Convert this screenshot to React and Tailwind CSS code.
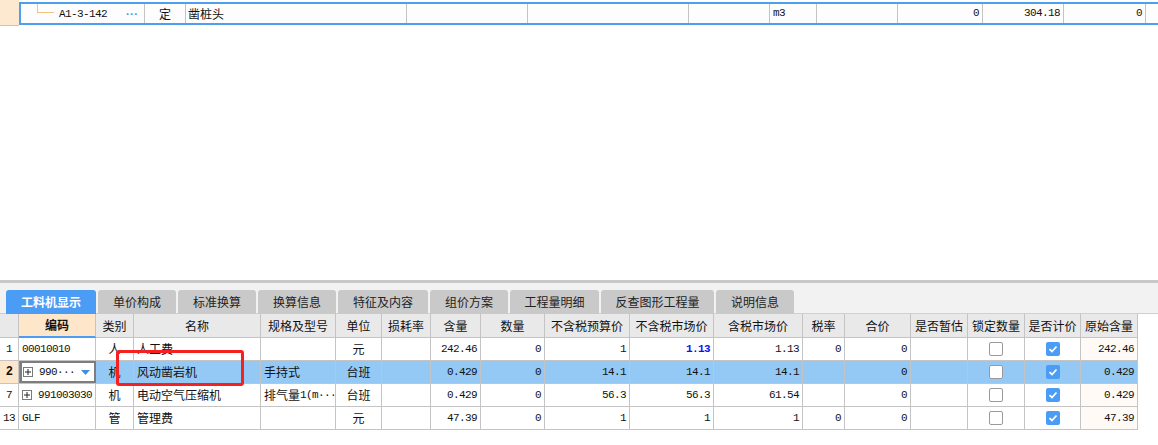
import React from 'react'

const zh = "font-['Noto_Sans_CJK_SC',sans-serif] text-[12px]"
const num = "font-['Liberation_Mono','Noto_Sans_CJK_SC',monospace] text-[11px] tracking-[-0.6px]"

const headers = ['', '编码', '类别', '名称', '规格及型号', '单位', '损耗率', '含量', '数量', '不含税预算价', '不含税市场价', '含税市场价', '税率', '合价', '是否暂估', '锁定数量', '是否计价', '原始含量']

const tabs = [
  { label: '工料机显示', w: 'w-[90px]', active: true },
  { label: '单价构成', w: 'w-[78px]' },
  { label: '标准换算', w: 'w-[78px]' },
  { label: '换算信息', w: 'w-[78px]' },
  { label: '特征及内容', w: 'w-[90px]' },
  { label: '组价方案', w: 'w-[78px]' },
  { label: '工程量明细', w: 'w-[89px]' },
  { label: '反查图形工程量', w: 'w-[113px]' },
  { label: '说明信息', w: 'w-[78px]' },
]

const rows = [
  { no: '1', code: '00010010', type: '人', name: '人工费', spec: '', unit: '元', amt: '242.46', qty: '0', pre: '1', mkt: '1.13', blue: true, tax: '1.13', rate: '0', total: '0', orig: '242.46' },
  { no: '2', code: '990···', plus: true, edit: true, type: '机', name: '风动凿岩机', spec: '手持式', unit: '台班', amt: '0.429', qty: '0', pre: '14.1', mkt: '14.1', tax: '14.1', rate: '', total: '0', orig: '0.429' },
  { no: '7', code: '991003030', plus: true, type: '机', name: '电动空气压缩机', spec: '排气量', specTail: '1(m···', unit: '台班', amt: '0.429', qty: '0', pre: '56.3', mkt: '56.3', tax: '61.54', rate: '', total: '0', orig: '0.429' },
  { no: '13', code: 'GLF', type: '管', name: '管理费', spec: '', unit: '元', amt: '47.39', qty: '0', pre: '1', mkt: '1', tax: '1', rate: '0', total: '0', orig: '47.39' },
]

const grid = 'grid grid-cols-[19px_77px_38px_127px_75px_46px_49px_50px_64px_85px_84px_89px_42px_66px_57px_57px_56px_57px] w-[1138px]'

function PlusBox() {
  return (
    <svg width="10" height="10" viewBox="0 0 10 10" className="shrink-0">
      <rect x="0.5" y="0.5" width="9" height="9" fill="white" stroke="#7a7a7a" />
      <line x1="2" y1="5" x2="8" y2="5" stroke="#222" />
      <line x1="5" y1="2" x2="5" y2="8" stroke="#222" />
    </svg>
  )
}

function Check({ on }) {
  if (on) {
    return (
      <div className="w-[14px] h-[14px] rounded-[2px] bg-[#4a9cf5] flex items-center justify-center">
        <svg width="10" height="10" viewBox="0 0 10 10">
          <polyline points="1.5,5.2 4,7.5 8.5,2.5" fill="none" stroke="white" strokeWidth="1.8" />
        </svg>
      </div>
    )
  }
  return <div className="w-[14px] h-[14px] rounded-[2px] bg-white border border-[#9a9a9a]" />
}

function Row({ r }) {
  const sel = r.edit
  const bg = sel ? 'bg-[#94c8f5]' : 'bg-white'
  const c = 'h-[23px] border-r border-b border-[#c4c4c4] flex items-center'
  const right = `${c} ${bg} justify-end pr-[3px] ${num}`
  return (
    <>
      <div className={`${c} justify-center ${num} ${sel ? 'bg-[#fde6c9] font-bold text-[12px]' : 'bg-white'}`}>{r.no}</div>
      {r.edit ? (
        <div className="h-[23px] border-b border-[#c4c4c4] flex bg-white">
          <div className="w-[1px] h-full bg-[#4a9cf5]" />
          <div className="flex-1 h-full border-2 border-[#7d7d7d] flex items-center pl-[1px] pr-[4px] gap-[6px]">
            <PlusBox />
            <span className={num}>{r.code}</span>
            <svg width="9" height="5" viewBox="0 0 9 5" className="ml-auto">
              <polygon points="0,0 9,0 4.5,5" fill="#3f8fdb" />
            </svg>
          </div>
        </div>
      ) : (
        <div className={`${c} ${bg} pl-[3px] gap-[6px] ${num}`}>
          {r.plus && <PlusBox />}
          <span>{r.code}</span>
        </div>
      )}
      <div className={`${c} ${bg} justify-center ${zh}`}>{r.type}</div>
      <div className={`${c} ${bg} pl-[3px] ${zh}`}>{r.name}</div>
      <div className={`${c} ${bg} pl-[3px] whitespace-nowrap`}>
        <span className={zh}>{r.spec}</span>
        {r.specTail && <span className={num}>{r.specTail}</span>}
      </div>
      <div className={`${c} ${bg} justify-center ${zh}`}>{r.unit}</div>
      <div className={`${c} ${bg}`} />
      <div className={right}>{r.amt}</div>
      <div className={right}>{r.qty}</div>
      <div className={right}>{r.pre}</div>
      <div className={`${right} ${r.blue ? 'text-[#1010ee] font-bold' : ''}`}>{r.mkt}</div>
      <div className={right}>{r.tax}</div>
      <div className={right}>{r.rate}</div>
      <div className={right}>{r.total}</div>
      <div className={`${c} ${bg}`} />
      <div className={`${c} ${bg} justify-center`}><Check on={false} /></div>
      <div className={`${c} ${bg} justify-center`}><Check on={true} /></div>
      <div className={`${c} ${sel ? 'bg-[#94c8f5]' : 'bg-[#fffaf5]'} justify-end pr-[3px] ${num}`}>{r.orig}</div>
    </>
  )
}

export default function App() {
  const tc = 'h-full border-r border-[#c4c4c4] flex items-center'
  return (
    <div className="relative w-[1158px] h-[445px] bg-white overflow-hidden text-[#111]">
      {/* top area */}
      <div className="h-[280px] flex items-start">
        <div className="w-[19px] h-[26px] bg-[#fde8d0] border-b border-[#c4c4c4]" />
        <div className="mt-[2px] h-[23px] flex-1 border-y-2 border-l-2 border-[#4f9ff0] flex bg-[#fdfdfd]">
          <div className={`${tc} w-[124px] items-start relative`}>
            <div className="ml-[16px] w-[17px] h-[9px] border-l border-b border-[#f5c27a]" />
            <span className={`${num} mt-[2px] ml-[5px]`}>A1-3-142</span>
            <span className="ml-[19px] mt-[2px] text-[#3a8ee6] font-bold text-[11px] tracking-[1px]">···</span>
          </div>
          <div className={`${tc} w-[41px] justify-center ${zh}`}>定</div>
          <div className={`${tc} w-[221px] pl-[2px] ${zh}`}>凿桩头</div>
          <div className={`${tc} w-[121px]`} />
          <div className={`${tc} w-[161px]`} />
          <div className={`${tc} w-[81px]`} />
          <div className={`${tc} w-[47px] pl-[3px] ${num}`}>m3</div>
          <div className={`${tc} w-[81px]`} />
          <div className={`${tc} w-[85px] justify-end pr-[3px] ${num}`}>0</div>
          <div className={`${tc} w-[81px] justify-end pr-[3px] ${num}`}>304.18</div>
          <div className={`${tc} w-[82px] justify-end pr-[3px] ${num}`}>0</div>
          <div className="flex-1" />
        </div>
      </div>

      <div className="h-[3px] bg-[#c8c8c8]" />

      {/* tabs */}
      <div className="h-[31px] bg-[#f2f2f2] pt-[7px] pl-[6px] flex gap-[2px] border-b border-[#d0d0d0]">
        {tabs.map(t => (
          <div
            key={t.label}
            className={`${t.w} h-[24px] rounded-t-[3px] flex items-center justify-center font-['Noto_Sans_CJK_SC',sans-serif] text-[12px] ${t.active ? 'bg-[#4a9cf5] text-white font-bold' : 'bg-[#c9c9c9] text-[#222]'}`}
          >
            {t.label}
          </div>
        ))}
      </div>

      {/* grid */}
      <div className={grid}>
        {headers.map((h, i) => (
          <div
            key={i}
            className={`h-[24px] border-r border-b border-[#c4c4c4] flex items-center justify-center ${zh} ${i === 1 ? 'bg-[#fde6c9] font-bold border-b-2 border-b-[#4a9cf5]' : 'bg-[#e9e9e9]'}`}
          >
            {h}
          </div>
        ))}
        {rows.map(r => <Row key={r.no} r={r} />)}
      </div>

      {/* annotation */}
      <div className="absolute left-[116px] top-[350px] w-[128px] h-[36px] border-[3px] border-[#f52020] rounded-[3px]" />
    </div>
  )
}
